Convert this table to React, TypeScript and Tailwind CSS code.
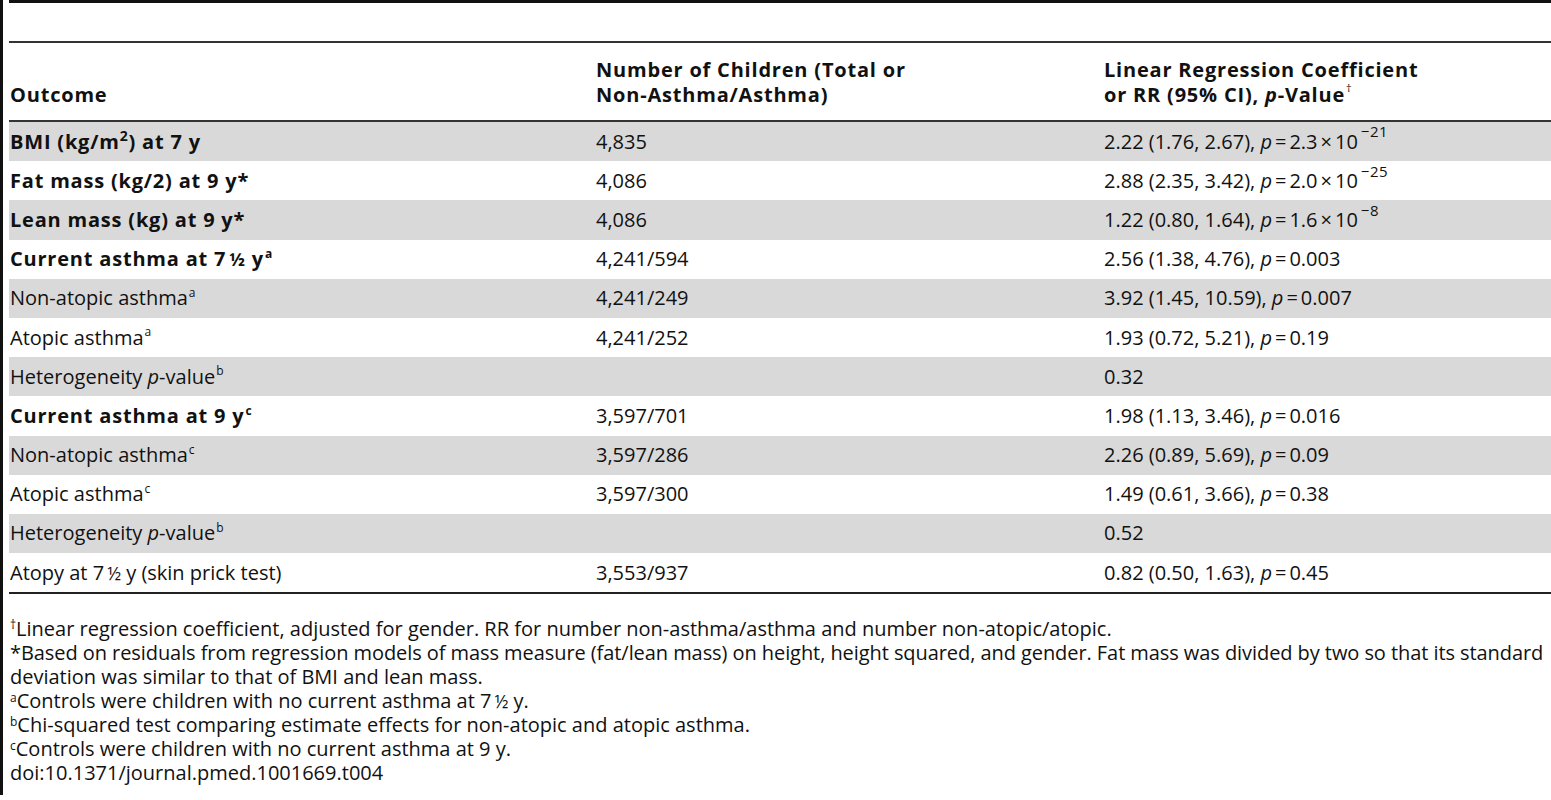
import React from "react";

const F = { fontFamily: '"Open Sans", "Noto Sans", sans-serif' };

const P = () => <i>p</i>;
const Eq = () => <span className="mx-[3px]">=</span>;
const Sup = ({ children }: { children: React.ReactNode }) => (
  <sup className="text-[12px] leading-none top-[-0.7em] ml-[1px]">{children}</sup>
);
const Exp = ({ children }: { children: React.ReactNode }) => (
  <sup className="text-[15px] leading-none top-[-0.75em] ml-[3px] tracking-[0.5px]">{children}</sup>
);
const Times = () => <span className="mx-[3px]">×</span>;
const Half = () => <span className="ml-[3px] text-[18px]">½</span>;

type Row = { o: React.ReactNode; n: string; v: React.ReactNode; bold?: boolean };

const rows: Row[] = [
  {
    bold: true,
    o: (
      <>
        BMI (kg/m<sup className="text-[14px] leading-none top-[-0.55em]">2</sup>) at 7 y
      </>
    ),
    n: "4,835",
    v: (
      <>
        2.22 (1.76, 2.67), <P />
        <Eq />
        2.3
        <Times />
        10<Exp>−21</Exp>
      </>
    ),
  },
  {
    bold: true,
    o: <>Fat mass (kg/2) at 9 y*</>,
    n: "4,086",
    v: (
      <>
        2.88 (2.35, 3.42), <P />
        <Eq />
        2.0
        <Times />
        10<Exp>−25</Exp>
      </>
    ),
  },
  {
    bold: true,
    o: <>Lean mass (kg) at 9 y*</>,
    n: "4,086",
    v: (
      <>
        1.22 (0.80, 1.64), <P />
        <Eq />
        1.6
        <Times />
        10<Exp>−8</Exp>
      </>
    ),
  },
  {
    bold: true,
    o: (
      <>
        Current asthma at 7<Half /> y<Sup>a</Sup>
      </>
    ),
    n: "4,241/594",
    v: (
      <>
        2.56 (1.38, 4.76), <P />
        <Eq />
        0.003
      </>
    ),
  },
  {
    o: (
      <>
        Non-atopic asthma<Sup>a</Sup>
      </>
    ),
    n: "4,241/249",
    v: (
      <>
        3.92 (1.45, 10.59), <P />
        <Eq />
        0.007
      </>
    ),
  },
  {
    o: (
      <>
        Atopic asthma<Sup>a</Sup>
      </>
    ),
    n: "4,241/252",
    v: (
      <>
        1.93 (0.72, 5.21), <P />
        <Eq />
        0.19
      </>
    ),
  },
  {
    o: (
      <>
        Heterogeneity <P />-value<Sup>b</Sup>
      </>
    ),
    n: "",
    v: <>0.32</>,
  },
  {
    bold: true,
    o: (
      <>
        Current asthma at 9 y<Sup>c</Sup>
      </>
    ),
    n: "3,597/701",
    v: (
      <>
        1.98 (1.13, 3.46), <P />
        <Eq />
        0.016
      </>
    ),
  },
  {
    o: (
      <>
        Non-atopic asthma<Sup>c</Sup>
      </>
    ),
    n: "3,597/286",
    v: (
      <>
        2.26 (0.89, 5.69), <P />
        <Eq />
        0.09
      </>
    ),
  },
  {
    o: (
      <>
        Atopic asthma<Sup>c</Sup>
      </>
    ),
    n: "3,597/300",
    v: (
      <>
        1.49 (0.61, 3.66), <P />
        <Eq />
        0.38
      </>
    ),
  },
  {
    o: (
      <>
        Heterogeneity <P />-value<Sup>b</Sup>
      </>
    ),
    n: "",
    v: <>0.52</>,
  },
  {
    o: (
      <>
        Atopy at 7<Half /> y (skin prick test)
      </>
    ),
    n: "3,553/937",
    v: (
      <>
        0.82 (0.50, 1.63), <P />
        <Eq />
        0.45
      </>
    ),
  },
];

export default function App() {
  return (
    <div className="w-[1551px] h-[800px] bg-white text-[#111] flex overflow-hidden" style={F}>
      <div className="w-[3px] h-[795px] bg-[#111] shrink-0" />
      <div className="ml-[6px] flex-1 flex flex-col min-w-0">
        <div className="h-[3px] bg-[#111]" />
        <div className="h-[38px]" />
        <div className="h-[2px] bg-[#333]" />
        <div className="grid grid-cols-[587px_508px_1fr] h-[77px] items-end pb-[13px] text-[20px] leading-[25px] font-bold tracking-[0.8px] whitespace-nowrap">
          <div className="pl-[1px]">Outcome</div>
          <div>
            Number of Children (Total or
            <br />
            Non-Asthma/Asthma)
          </div>
          <div>
            Linear Regression Coefficient
            <br />
            or RR (95% CI), <i>p</i>-Value
            <sup className="text-[11px] leading-none font-normal top-[-0.9em] ml-[1px]">†</sup>
          </div>
        </div>
        <div className="h-[2px] bg-[#333]" />
        <div className="flex flex-col">
          {rows.map((r, i) => (
            <div
              key={i}
              className={`grid grid-cols-[587px_508px_1fr] h-[39.2px] items-center text-[20px] whitespace-nowrap ${
                i % 2 === 0 ? "bg-[#d9d9d9]" : "bg-white"
              }`}
            >
              <div className={`pl-[1px] ${r.bold ? "font-bold tracking-[0.8px]" : ""}`}>{r.o}</div>
              <div>{r.n}</div>
              <div>{r.v}</div>
            </div>
          ))}
        </div>
        <div className="h-[2px] bg-[#222]" />
        <div className="pt-[23px] pl-[1px] text-[20px] leading-[24px] whitespace-nowrap">
          <div>
            <sup className="text-[12px] leading-none top-[-0.6em]">†</sup>Linear regression coefficient, adjusted for
            gender. RR for number non-asthma/asthma and number non-atopic/atopic.
          </div>
          <div className="tracking-[-0.07px]">
            *Based on residuals from regression models of mass measure (fat/lean mass) on height, height squared, and
            gender. Fat mass was divided by two so that its standard
          </div>
          <div>deviation was similar to that of BMI and lean mass.</div>
          <div>
            <sup className="text-[12px] leading-none top-[-0.55em]">a</sup>Controls were children with no current asthma
            at 7<Half /> y.
          </div>
          <div>
            <sup className="text-[12px] leading-none top-[-0.55em]">b</sup>Chi-squared test comparing estimate effects
            for non-atopic and atopic asthma.
          </div>
          <div>
            <sup className="text-[12px] leading-none top-[-0.55em]">c</sup>Controls were children with no current asthma
            at 9 y.
          </div>
          <div>doi:10.1371/journal.pmed.1001669.t004</div>
        </div>
      </div>
    </div>
  );
}
